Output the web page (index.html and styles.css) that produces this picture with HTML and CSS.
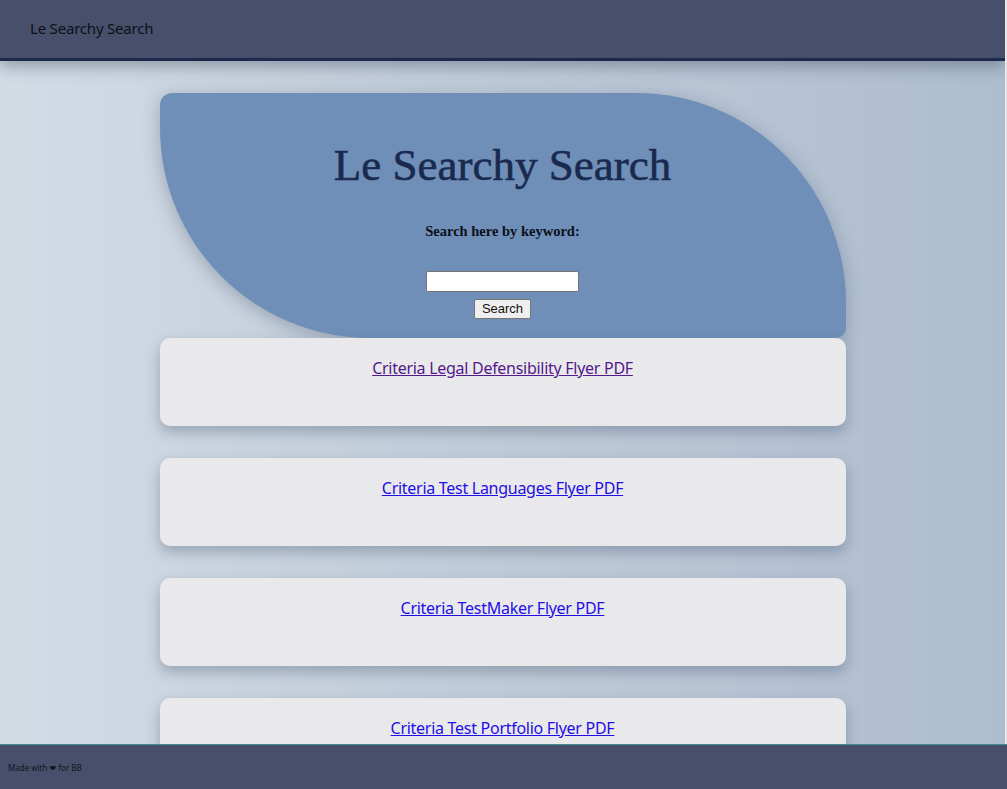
FILE: index.html
```html
<!DOCTYPE html>
<html lang="en">
<head>
<meta charset="utf-8">
<title>Le Searchy Search</title>
<link rel="stylesheet" href="styles.css">
</head>
<body>
<header class="topbar">
  <span class="brand">Le Searchy Search</span>
</header>
<main class="content">
  <section class="hero">
    <h1 class="hero-title">Le Searchy Search</h1>
    <form class="search-form">
      <label class="search-label" for="q">Search here by keyword:</label>
      <input class="search-input" id="q" type="text">
      <button class="search-button" type="button">Search</button>
    </form>
  </section>
  <div class="results">
    <div class="card"><a class="card-link visited" href="#a">Criteria Legal Defensibility Flyer PDF</a></div>
    <div class="card"><a class="card-link" href="#b">Criteria Test Languages Flyer PDF</a></div>
    <div class="card"><a class="card-link" href="#c">Criteria TestMaker Flyer PDF</a></div>
    <div class="card"><a class="card-link" href="#d">Criteria Test Portfolio Flyer PDF</a></div>
  </div>
</main>
<footer class="footer">
  <span class="footer-text">Made with &#10084; for BB</span>
</footer>
</body>
</html>
```
FILE: styles.css
```css
html, body {
  margin: 0;
  padding: 0;
}
body {
  min-height: 100vh;
  background: linear-gradient(to right, #d3dbe5 0%, #bfcbd9 50%, #adbccf 100%);
  background-attachment: fixed;
  font-family: "Noto Sans", "DejaVu Sans", sans-serif;
  border-right: 2px solid #e6e7ea;
  box-sizing: border-box;
}
.topbar {
  height: 58px;
  background: #474f6a;
  border-bottom: 3px solid #1e2a4c;
  display: flex;
  align-items: center;
  padding-left: 30px;
  box-shadow: 0 6px 14px rgba(40, 50, 70, 0.35);
  position: relative;
  z-index: 2;
}
.brand {
  font-size: 15px;
  color: #0c0f18;
  letter-spacing: -0.2px;
  margin-top: -2px;
}
.content {
  display: flex;
  flex-direction: column;
  align-items: center;
  padding-top: 32px;
  padding-bottom: 60px;
}
.hero {
  width: 686px;
  height: 245px;
  box-sizing: border-box;
  background: #6f8fb8;
  border-radius: 12px 210px 10px 210px;
  box-shadow: 0 4px 18px rgba(60, 75, 100, 0.35);
  display: flex;
  flex-direction: column;
  align-items: center;
  padding-top: 44px;
}
.hero-title {
  margin: 0;
  font-family: "Liberation Serif", "DejaVu Serif", serif;
  font-weight: normal;
  font-size: 45px;
  line-height: 56px;
  color: #1a2a4e;
  -webkit-text-stroke: 0.6px #1a2a4e;
}
.search-form {
  display: flex;
  flex-direction: column;
  align-items: center;
  margin-top: 29px;
}
.search-label {
  font-family: "Liberation Serif", "DejaVu Serif", serif;
  font-weight: bold;
  font-size: 14.5px;
  line-height: 18px;
  color: #0b0f1a;
  margin-bottom: 31px;
}
.search-input {
  width: 153px;
  height: 21px;
  box-sizing: border-box;
  border: 1px solid #767676;
  border-radius: 2px;
  background: #fff;
  padding: 1px 2px;
  margin: 0;
}
.search-button {
  margin-top: 7px;
  height: 20px;
  padding: 0 7px;
  font-family: "Liberation Sans", Arial, sans-serif;
  font-size: 13px;
  color: #111;
  background: #efefef;
  border: 1px solid #767676;
  border-radius: 2px;
  line-height: 18px;
}
.results {
  display: flex;
  flex-direction: column;
  gap: 32px;
  width: 686px;
}
.card {
  height: 88px;
  box-sizing: border-box;
  background: #e9e9ec;
  border-radius: 10px;
  box-shadow: 0 6px 14px rgba(60, 75, 100, 0.35);
  display: flex;
  justify-content: center;
  align-items: flex-start;
  padding-top: 19px;
}
.card-link {
  font-size: 16px;
  line-height: 22px;
  color: #1f0ee6;
  letter-spacing: -0.28px;
}
.card-link.visited {
  color: #52198b;
}
.footer {
  position: fixed;
  left: 0;
  right: 0;
  bottom: 0;
  height: 45px;
  box-sizing: border-box;
  background: #474f6a;
  border-top: 1px solid #3f8f8a;
  display: flex;
  align-items: center;
  padding-left: 8px;
  z-index: 3;
}
.footer-text {
  font-size: 8px;
  color: #111522;
}
```
